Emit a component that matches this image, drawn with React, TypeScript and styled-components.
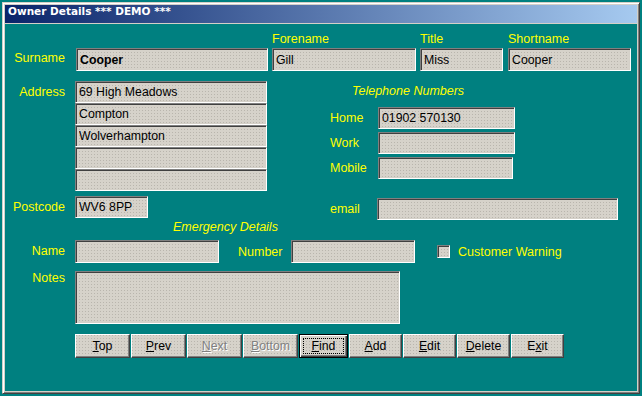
import React from 'react';
import styled, { createGlobalStyle, css } from 'styled-components';

const FACE = '#d4d0c8';

const Global = createGlobalStyle`
  html, body { margin: 0; padding: 0; background: #008080; }
  body { width: 642px; height: 396px; overflow: hidden; font-family: "Liberation Sans", Arial, sans-serif; }
`;

const dither = css`
  background-color: #d6d2ca;
  background-image: radial-gradient(circle at 0.5px 0.5px, #b9b5ad 0.6px, transparent 0.7px),
    radial-gradient(circle at 2px 2px, #b9b5ad 0.6px, transparent 0.7px);
  background-size: 3px 3px, 3px 3px;
`;

const Window = styled.div`
  margin: 2px;
  width: 638px;
  height: 392px;
  box-sizing: border-box;
  background: ${FACE};
  border: 1px solid;
  border-color: ${FACE} #404040 #404040 ${FACE};
  box-shadow: inset 1px 1px #ffffff, inset -1px -1px #808080;
  padding: 2px;
  display: flex;
  flex-direction: column;
`;

const Inner = styled.div`
  flex: 1;
  background: #008080;
  display: flex;
  flex-direction: column;
`;

const TitleBar = styled.div`
  height: 18px;
  line-height: 18px;
  padding-left: 3px;
  background: linear-gradient(to right, #0a246a, #a6caf0);
  border-bottom: 1px solid ${FACE};
  color: #ffffff;
  font: bold 10.5px "DejaVu Sans", Tahoma, sans-serif;
`;

const Content = styled.div`
  display: flex;
  flex-direction: column;
  font-size: 12.5px;
  color: #ffff00;
`;

const Row = styled.div<{ $mt?: number; $align?: string; $pl?: number }>`
  display: flex;
  align-items: ${(p) => p.$align || 'center'};
  margin-top: ${(p) => p.$mt || 0}px;
  padding-left: ${(p) => p.$pl || 0}px;
`;

const SideLabel = styled.div<{ $lh?: number; $mb?: number }>`
  width: 60px;
  margin-right: 10px;
  text-align: right;
  line-height: ${(p) => p.$lh || 22}px;
  margin-bottom: ${(p) => p.$mb || 0}px;
  white-space: nowrap;
`;

const Group = styled.div<{ $ml?: number }>`
  display: flex;
  flex-direction: column;
  margin-left: ${(p) => p.$ml || 0}px;
`;

const GroupLabel = styled.div`
  line-height: 14px;
  margin-bottom: 2px;
  white-space: nowrap;
`;

const Field = styled.input<{ $w: number; $h?: number; $bold?: boolean; $ml?: number }>`
  box-sizing: border-box;
  width: ${(p) => p.$w}px;
  height: ${(p) => p.$h || 22}px;
  margin: 0 0 0 ${(p) => p.$ml || 0}px;
  padding: 0 3px;
  ${dither};
  border: 1px solid;
  border-color: #808080 #ffffff #ffffff #808080;
  box-shadow: inset 1px 1px #404040, inset -1px -1px ${FACE};
  font-family: "Liberation Sans", Arial, sans-serif;
  font-size: 12.3px;
  font-weight: ${(p) => (p.$bold ? 'bold' : 'normal')};
  color: #000;
  outline: none;
`;

const Notes = styled.textarea`
  box-sizing: border-box;
  width: 325px;
  height: 53px;
  margin: 0;
  padding: 2px 3px;
  resize: none;
  ${dither};
  border: 1px solid;
  border-color: #808080 #ffffff #ffffff #808080;
  box-shadow: inset 1px 1px #404040, inset -1px -1px ${FACE};
  font-family: "Liberation Sans", Arial, sans-serif;
  font-size: 12px;
  outline: none;
`;

const Stack = styled.div`
  display: flex;
  flex-direction: column;
`;

const Middle = styled.div`
  display: flex;
  align-items: flex-start;
  margin-top: 10px;
`;

const LeftCol = styled.div`
  display: flex;
  flex-direction: column;
`;

const RightCol = styled.div`
  display: flex;
  flex-direction: column;
  margin-left: 62px;
`;

const Heading = styled.div<{ $mt?: number; $pl: number }>`
  font-style: italic;
  line-height: 14px;
  margin-top: ${(p) => p.$mt || 0}px;
  padding-left: ${(p) => p.$pl}px;
  white-space: nowrap;
`;

const RightLabel = styled.div<{ $w?: number; $ml?: number }>`
  box-sizing: border-box;
  width: ${(p) => p.$w || 49}px;
  margin-left: ${(p) => p.$ml || 0}px;
  padding-left: 1px;
  white-space: nowrap;
`;

const CheckBox = styled.div`
  box-sizing: border-box;
  width: 13px;
  height: 13px;
  margin-left: 22px;
  ${dither};
  border: 1px solid;
  border-color: #808080 #ffffff #ffffff #808080;
  box-shadow: inset 1px 1px #404040, inset -1px -1px ${FACE};
`;

const CheckLabel = styled.div`
  margin-left: 8px;
  white-space: nowrap;
`;

const ButtonRow = styled.div`
  display: flex;
  gap: 1px;
  margin-top: 10px;
  padding-left: 70px;
`;

const Btn = styled.button<{ $w: number; $default?: boolean }>`
  box-sizing: border-box;
  width: ${(p) => p.$w}px;
  height: 24px;
  padding: 0;
  margin: 0;
  ${dither};
  font-family: "Liberation Sans", Arial, sans-serif;
  font-size: 12.3px;
  color: #000;
  border: 1px solid;
  border-color: #ffffff #404040 #404040 #ffffff;
  box-shadow: inset -1px -1px #808080;
  &:disabled {
    color: #808080;
    text-shadow: 1px 1px #ffffff;
  }
  ${(p) =>
    p.$default &&
    css`
      border-color: #000;
      box-shadow: inset 1px 1px #ffffff, inset -1px -1px #404040, inset -2px -2px #808080;
      outline: 1px dotted #000;
      outline-offset: -5px;
    `}
`;

const buttons: { pre: string; key: string; post: string; w: number; disabled?: boolean; def?: boolean }[] = [
  { pre: '', key: 'T', post: 'op', w: 55 },
  { pre: '', key: 'P', post: 'rev', w: 55 },
  { pre: '', key: 'N', post: 'ext', w: 55, disabled: true },
  { pre: '', key: 'B', post: 'ottom', w: 55, disabled: true },
  { pre: '', key: 'F', post: 'ind', w: 49, def: true },
  { pre: '', key: 'A', post: 'dd', w: 53 },
  { pre: '', key: 'E', post: 'dit', w: 53 },
  { pre: '', key: 'D', post: 'elete', w: 53 },
  { pre: 'E', key: 'x', post: 'it', w: 53 },
];

export default function App() {
  return (
    <>
      <Global />
      <Window>
        <Inner>
          <TitleBar>Owner Details *** DEMO ***</TitleBar>
          <Content>
            <Row $mt={8} $align="flex-end">
              <SideLabel $lh={20} $mb={3}>Surname</SideLabel>
              <Field $w={192} $h={23} $bold readOnly value="Cooper" style={{ marginLeft: 1 }} />
              <Group $ml={4}>
                <GroupLabel>Forename</GroupLabel>
                <Field $w={144} $h={23} readOnly value="Gill" />
              </Group>
              <Group $ml={4}>
                <GroupLabel>Title</GroupLabel>
                <Field $w={83} $h={23} readOnly value="Miss" />
              </Group>
              <Group $ml={5}>
                <GroupLabel>Shortname</GroupLabel>
                <Field $w={123} $h={23} readOnly value="Cooper" />
              </Group>
            </Row>

            <Middle>
              <LeftCol>
                <Row $align="flex-start">
                  <SideLabel>Address</SideLabel>
                  <Stack>
                    <Field $w={192} readOnly value="69 High Meadows" />
                    <Field $w={192} readOnly value="Compton" />
                    <Field $w={192} readOnly value="Wolverhampton" />
                    <Field $w={192} readOnly value="" />
                    <Field $w={192} readOnly value="" />
                  </Stack>
                </Row>
                <Row $mt={5}>
                  <SideLabel>Postcode</SideLabel>
                  <Field $w={73} readOnly value="WV6 8PP" />
                </Row>
              </LeftCol>

              <RightCol>
                <Heading $mt={3} $pl={23}>Telephone Numbers</Heading>
                <Row $mt={9}>
                  <RightLabel>Home</RightLabel>
                  <Field $w={137} readOnly value="01902 570130" />
                </Row>
                <Row $mt={3}>
                  <RightLabel>Work</RightLabel>
                  <Field $w={137} readOnly value="" />
                </Row>
                <Row $mt={3}>
                  <RightLabel>Mobile</RightLabel>
                  <Field $w={135} readOnly value="" />
                </Row>
                <Row $mt={19}>
                  <RightLabel $w={48}>email</RightLabel>
                  <Field $w={241} readOnly value="" />
                </Row>
              </RightCol>
            </Middle>

            <Heading $pl={168}>Emergency Details</Heading>

            <Row $mt={6}>
              <SideLabel $lh={23}>Name</SideLabel>
              <Field $w={144} $h={23} readOnly value="" />
              <RightLabel $w={54} $ml={18}>Number</RightLabel>
              <Field $w={124} $h={23} readOnly value="" />
              <CheckBox />
              <CheckLabel>Customer Warning</CheckLabel>
            </Row>

            <Row $mt={8} $align="flex-start">
              <SideLabel $lh={14}>Notes</SideLabel>
              <Notes readOnly value="" />
            </Row>

            <ButtonRow>
              {buttons.map((b) => (
                <Btn key={b.key + b.post} $w={b.w} $default={b.def} disabled={b.disabled}>
                  {b.pre}
                  <u>{b.key}</u>
                  {b.post}
                </Btn>
              ))}
            </ButtonRow>
          </Content>
        </Inner>
      </Window>
    </>
  );
}
